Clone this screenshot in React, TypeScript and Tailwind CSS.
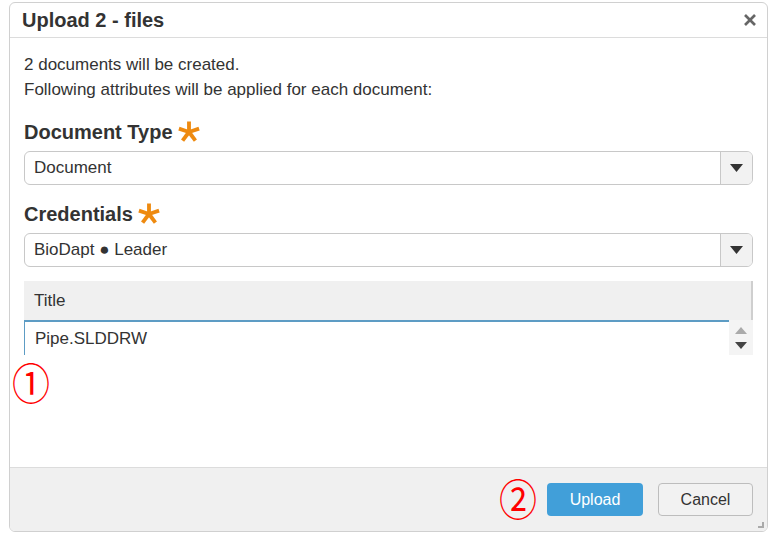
import React from "react";

function Caret({ className = "" }: { className?: string }) {
  return (
    <svg width="13" height="8" viewBox="0 0 13 8" className={className}>
      <polygon points="0,0 13,0 6.5,8" fill="currentColor" />
    </svg>
  );
}

function Star() {
  return (
    <svg width="22" height="22" viewBox="0 0 24 24" className="ml-[5px] text-[#ee8a10]">
      <g stroke="currentColor" strokeWidth="4.2" strokeLinecap="butt">
        <line x1="12" y1="0.5" x2="12" y2="12" />
        <line x1="12" y1="12" x2="1" y2="8.4" />
        <line x1="12" y1="12" x2="23" y2="8.4" />
        <line x1="12" y1="12" x2="5" y2="21.5" />
        <line x1="12" y1="12" x2="19" y2="21.5" />
      </g>
    </svg>
  );
}

function Select({ value }: { value: string }) {
  return (
    <div className="flex h-[34px] rounded-[6px] border border-[#c8c8c8] bg-white overflow-hidden">
      <div className="flex-1 flex items-center pl-[9px] text-[17px] text-[#333]">{value}</div>
      <div className="w-[32px] flex items-center justify-center border-l border-[#c8c8c8] bg-[#f2f2f2] text-[#333]">
        <Caret />
      </div>
    </div>
  );
}

export default function App() {
  return (
    <div className="w-[768px] h-[543px] bg-white font-['Liberation_Sans',Arial,sans-serif] pt-[2px] pl-[9px]">
      <div className="w-[759px] h-[530px] border border-[#d0d0d0] rounded-[6px] flex flex-col overflow-hidden relative">
        <div className="h-[35px] border-b border-[#dcdcdc] flex items-center justify-between pl-[12px] pr-[11px]">
          <span className="text-[20px] font-bold text-[#333]">Upload 2 - files</span>
          <svg width="12" height="12" viewBox="0 0 12 12" className="text-[#666]">
            <g stroke="currentColor" strokeWidth="2.6">
              <line x1="1" y1="1" x2="11" y2="11" />
              <line x1="11" y1="1" x2="1" y2="11" />
            </g>
          </svg>
        </div>
        <div className="flex-1 px-[14px] pt-[14px] text-[#333]">
          <div className="text-[17px] leading-[25px]">
            <div>2 documents will be created.</div>
            <div>Following attributes will be applied for each document:</div>
          </div>
          <div className="mt-[18px] flex items-center h-[24px] text-[20px] font-bold">
            Document Type
            <Star />
          </div>
          <div className="mt-[7px]">
            <Select value="Document" />
          </div>
          <div className="mt-[17px] flex items-center h-[24px] text-[20px] font-bold">
            Credentials
            <Star />
          </div>
          <div className="mt-[7px]">
            <Select value="BioDapt ● Leader" />
          </div>
          <div className="mt-[14px]">
            <div className="h-[39px] bg-[#f0f0f0] border-r-2 border-[#cfcfcf] flex items-center pl-[10px] text-[17px] text-[#333]">
              Title
            </div>
            <div className="flex h-[35px]">
              <div className="flex-1 border-t-2 border-l border-[#5d9cc4] flex items-center pl-[10px] text-[17px] text-[#333]">
                Pipe.SLDDRW
              </div>
              <div className="w-[24px] bg-[#f4f4f4] flex flex-col items-center justify-center gap-[8px]">
                <svg width="12" height="7" viewBox="0 0 12 7" className="text-[#aaa]">
                  <polygon points="0,7 12,7 6,0" fill="currentColor" />
                </svg>
                <svg width="12" height="7" viewBox="0 0 12 7" className="text-[#444]">
                  <polygon points="0,0 12,0 6,7" fill="currentColor" />
                </svg>
              </div>
            </div>
          </div>
          <div className="mt-[2px] -ml-[12px] text-[38px] leading-[42px] text-[#ff0000] font-['Noto_Sans_CJK_JP',sans-serif] scale-y-[1.15] origin-top w-fit">
            ①
          </div>
        </div>
        <div className="h-[64px] bg-[#f0f0f0] border-t border-[#dcdcdc] flex items-center justify-end pr-[14px] relative">
          <span className="text-[38px] leading-[42px] text-[#ff0000] font-['Noto_Sans_CJK_JP',sans-serif] mr-[10px] -mt-[4px] scale-y-[1.15]">②</span>
          <button className="w-[96px] h-[33px] rounded-[4px] bg-[#419fd9] text-white text-[16px]">Upload</button>
          <button className="ml-[15px] w-[95px] h-[33px] rounded-[4px] border border-[#bdbdbd] bg-[#f2f2f2] text-[#333] text-[16px]">Cancel</button>
          <svg width="6" height="6" viewBox="0 0 6 6" className="absolute right-[3px] bottom-[3px] text-[#aaa]">
            <rect x="4" y="0" width="2" height="6" fill="currentColor" />
            <rect x="0" y="4" width="6" height="2" fill="currentColor" />
          </svg>
        </div>
      </div>
    </div>
  );
}
